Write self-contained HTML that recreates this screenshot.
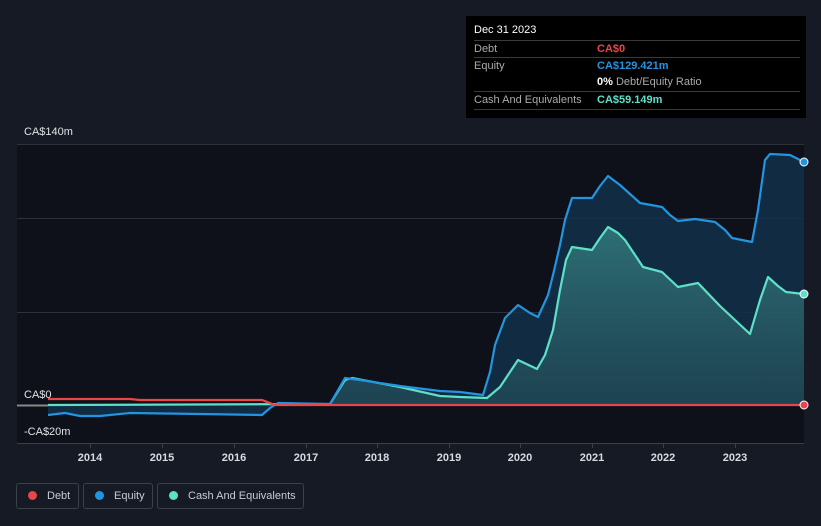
<!DOCTYPE html><html><head><style>
body{margin:0;width:821px;height:526px;background:#151a24;font-family:"Liberation Sans",sans-serif;overflow:hidden;position:relative}
.tt{position:absolute;left:466px;top:16px;width:340px;height:102px;background:#000;color:#aaa;font-size:11px}
.tt .r{position:absolute;left:8px;width:326px;border-top:1px solid #3a3a3a;height:17px;line-height:17px}
.tt .v{position:absolute;left:123px;top:0;font-weight:bold}
.lg{position:absolute;top:483px;height:26px;border:1px solid #3b404a;border-radius:3px;color:#c8cbd0;font-size:11px;line-height:24px;box-sizing:border-box;white-space:nowrap}
.lg i{display:inline-block;width:9px;height:9px;border-radius:50%;margin:0 10px 0 11px;vertical-align:-1px}
</style></head><body>
<svg width="821" height="526" style="position:absolute;left:0;top:0">
<defs><linearGradient id="gc" x1="0" y1="0" x2="0" y2="1"><stop offset="0" stop-color="#3a8c8c" stop-opacity=".7"/><stop offset="1" stop-color="#2a5a60" stop-opacity=".5"/></linearGradient></defs>
<rect x="17" y="144" width="787" height="299" fill="#0e1119"/>
<g stroke="#2c313b" stroke-width="1"><line x1="17" y1="144.5" x2="804" y2="144.5"/><line x1="17" y1="218.5" x2="804" y2="218.5"/><line x1="17" y1="312.5" x2="804" y2="312.5"/><line x1="17" y1="443.5" x2="804" y2="443.5" stroke="#3a3f48"/></g>
<line x1="17" y1="405.5" x2="48" y2="405.5" stroke="#888" stroke-width="2"/>
<g stroke="#3a3f48"><line x1="90.5" y1="443" x2="90.5" y2="448"/><line x1="162.5" y1="443" x2="162.5" y2="448"/><line x1="234.5" y1="443" x2="234.5" y2="448"/><line x1="306.5" y1="443" x2="306.5" y2="448"/><line x1="377.5" y1="443" x2="377.5" y2="448"/><line x1="449.5" y1="443" x2="449.5" y2="448"/><line x1="520.5" y1="443" x2="520.5" y2="448"/><line x1="592.5" y1="443" x2="592.5" y2="448"/><line x1="663.5" y1="443" x2="663.5" y2="448"/><line x1="735.5" y1="443" x2="735.5" y2="448"/></g>
<path d="M48,415 L65,413 L80,416 L100,416 L130,413 L200,414 L262,415 L270,408 L278,403 L330,404 L345,378 L360,380 L400,386 L440,391 L460,392 L483,395 L490,372 L495,345 L505,318 L518,305 L530,313 L538,317 L548,295 L553,275 L560,245 L565,220 L572,198 L592,198 L600,186 L608,176 L620,185 L640,203 L662,207 L670,215 L678,221 L695,219 L715,222 L725,230 L732,238 L752,242 L758,210 L765,160 L770,154 L790,155 L804,162 L804,405 L48,405Z" fill="#12304a" fill-opacity=".85"/>
<path d="M48,405 L330,404 L345,380 L352,378 L400,387 L440,396 L460,397 L487,398 L500,387 L510,372 L518,360 L537,369 L545,355 L553,330 L560,290 L566,260 L572,247 L592,250 L600,238 L608,227 L618,233 L625,240 L635,255 L643,267 L662,272 L678,287 L698,283 L720,306 L735,320 L750,334 L760,300 L768,277 L778,286 L786,292 L804,294 L804,405Z" fill="url(#gc)"/>
<path d="M48,405 L330,404 L345,380 L352,378 L400,387 L440,396 L460,397 L487,398 L500,387 L510,372 L518,360 L537,369 L545,355 L553,330 L560,290 L566,260 L572,247 L592,250 L600,238 L608,227 L618,233 L625,240 L635,255 L643,267 L662,272 L678,287 L698,283 L720,306 L735,320 L750,334 L760,300 L768,277 L778,286 L786,292 L804,294" fill="none" stroke="#5ee0c8" stroke-width="2.2" stroke-linejoin="round"/>
<path d="M48,415 L65,413 L80,416 L100,416 L130,413 L200,414 L262,415 L270,408 L278,403 L330,404 L345,378 L360,380 L400,386 L440,391 L460,392 L483,395 L490,372 L495,345 L505,318 L518,305 L530,313 L538,317 L548,295 L553,275 L560,245 L565,220 L572,198 L592,198 L600,186 L608,176 L620,185 L640,203 L662,207 L670,215 L678,221 L695,219 L715,222 L725,230 L732,238 L752,242 L758,210 L765,160 L770,154 L790,155 L804,162" fill="none" stroke="#2394e0" stroke-width="2.2" stroke-linejoin="round"/>
<path d="M48,399 L130,399 L140,400 L262,400 L275,405 L804,405" fill="none" stroke="#e8464a" stroke-width="2.2"/>
<circle cx="804" cy="162" r="4" fill="#2394e0" stroke="#fff" stroke-width="1"/>
<circle cx="804" cy="294" r="4" fill="#5ee0c8" stroke="#fff" stroke-width="1"/>
<circle cx="804" cy="405" r="4" fill="#e8464a" stroke="#fff" stroke-width="1"/>
<g fill="#e0e2e6" font-size="11" font-family="Liberation Sans"><text x="24" y="135">CA$140m</text><text x="24" y="398">CA$0</text><text x="24" y="435">-CA$20m</text>
<g text-anchor="middle" font-weight="bold" fill="#d8dade"><text x="90" y="461">2014</text><text x="162" y="461">2015</text><text x="234" y="461">2016</text><text x="306" y="461">2017</text><text x="377" y="461">2018</text><text x="449" y="461">2019</text><text x="520" y="461">2020</text><text x="592" y="461">2021</text><text x="663" y="461">2022</text><text x="735" y="461">2023</text></g></g>
</svg>
<div class="tt">
<div style="position:absolute;left:8px;top:8px;color:#fff">Dec 31 2023</div>
<div class="r" style="top:24px">Debt<span class="v" style="color:#e8464a">CA$0</span></div>
<div class="r" style="top:41px">Equity<span class="v" style="color:#2394e0">CA$129.421m</span></div>
<div class="r" style="top:58px;border-top:none"><span class="v" style="color:#aaa;font-weight:normal"><b style="color:#fff">0%</b> Debt/Equity Ratio</span></div>
<div class="r" style="top:75px">Cash And Equivalents<span class="v" style="color:#5ee0c8">CA$59.149m</span></div>
<div class="r" style="top:93px;height:0"></div>
</div>
<div class="lg" style="left:16px;width:63px"><i style="background:#e8464a"></i>Debt</div>
<div class="lg" style="left:83px;width:70px"><i style="background:#2394e0"></i>Equity</div>
<div class="lg" style="left:157px;width:147px"><i style="background:#5ee0c8"></i>Cash And Equivalents</div>
</body></html>
